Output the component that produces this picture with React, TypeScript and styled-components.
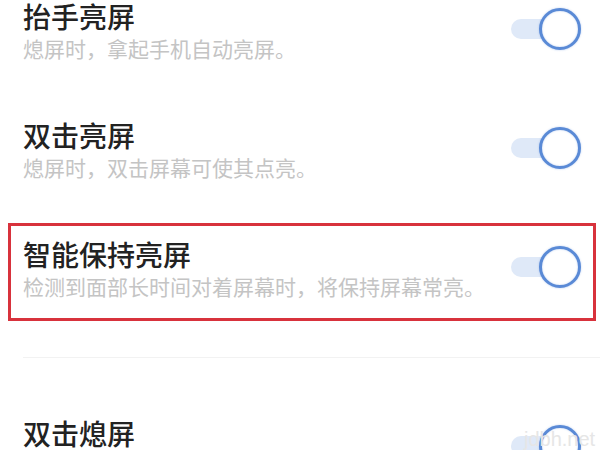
import styled, { createGlobalStyle } from 'styled-components';

const GlobalStyle = createGlobalStyle`
  html, body {
    margin: 0;
    padding: 0;
    background: #ffffff;
  }
  body {
    width: 600px;
    height: 450px;
    overflow: hidden;
    font-family: 'Noto Sans CJK SC', 'Noto Sans', sans-serif;
  }
`;

type Setting = {
  title: string;
  desc?: string;
  highlighted?: boolean;
};

const topGroup: Setting[] = [
  { title: '抬手亮屏', desc: '熄屏时，拿起手机自动亮屏。' },
  { title: '双击亮屏', desc: '熄屏时，双击屏幕可使其点亮。' },
  { title: '智能保持亮屏', desc: '检测到面部长时间对着屏幕时，将保持屏幕常亮。', highlighted: true },
];

const SettingRow = ({ item }: { item: Setting }) => (
  <StyledRow $highlighted={item.highlighted}>
    <StyledTexts>
      <StyledTitle>{item.title}</StyledTitle>
      {item.desc && <StyledDesc>{item.desc}</StyledDesc>}
    </StyledTexts>
    <StyledSwitch>
      <StyledTrack />
      <StyledKnob />
    </StyledSwitch>
  </StyledRow>
);

export default function App() {
  return (
    <>
      <GlobalStyle />
      <Page>
        <StyledGroup>
          {topGroup.map((item) => (
            <SettingRow key={item.title} item={item} />
          ))}
        </StyledGroup>
        <StyledDivider />
        <StyledGroup>
          <SettingRow item={{ title: '双击熄屏', desc: '亮屏时，双击屏幕可使其熄灭。' }} />
        </StyledGroup>
        <StyledWatermark>jdbh.net</StyledWatermark>
      </Page>
    </>
  );
}

const Page = styled.div`
  position: relative;
  width: 600px;
  height: 450px;
  overflow: hidden;
  background: #ffffff;
`;

const StyledGroup = styled.div`
  display: flex;
  flex-direction: column;
  gap: 58px;
`;

const StyledRow = styled.div<{ $highlighted?: boolean }>`
  position: relative;
  display: flex;
  align-items: center;
  justify-content: space-between;
  padding: 0 19px 0 23px;
  height: 61px;

  &::before {
    content: '';
    display: ${(p) => (p.$highlighted ? 'block' : 'none')};
    position: absolute;
    top: -15px;
    bottom: -22px;
    left: 8px;
    right: 4px;
    border: 3px solid #d8323c;
    pointer-events: none;
  }
`;

const StyledTexts = styled.div`
  display: flex;
  flex-direction: column;
  gap: 3px;
`;

const StyledTitle = styled.div`
  font-size: 28px;
  line-height: 32px;
  font-weight: 500;
  color: #222222;
  white-space: nowrap;
`;

const StyledDesc = styled.div`
  font-size: 21px;
  line-height: 26px;
  color: #c4c4c4;
  white-space: nowrap;
`;

const StyledSwitch = styled.div`
  position: relative;
  display: flex;
  align-items: center;
  width: 70px;
  height: 42px;
  margin-top: -3px;
`;

const StyledTrack = styled.div`
  width: 50px;
  height: 20px;
  border-radius: 10px;
  background: #dfe9f8;
`;

const StyledKnob = styled.div`
  position: absolute;
  right: 0;
  top: 0;
  box-sizing: border-box;
  width: 42px;
  height: 42px;
  border-radius: 50%;
  background: #ffffff;
  border: 3.5px solid #5a8ad6;
  box-shadow: 0 0 2px rgba(90, 138, 214, 0.45), inset 0 0 2px rgba(90, 138, 214, 0.4);
`;

const StyledDivider = styled.div`
  height: 1px;
  margin: 58px 0 59px 23px;
  background: #f2f2f2;
`;

const StyledWatermark = styled.div`
  position: absolute;
  left: 524px;
  top: 428px;
  font-family: 'Liberation Sans', sans-serif;
  font-size: 20px;
  color: #e6e6e6;
  pointer-events: none;
`;
